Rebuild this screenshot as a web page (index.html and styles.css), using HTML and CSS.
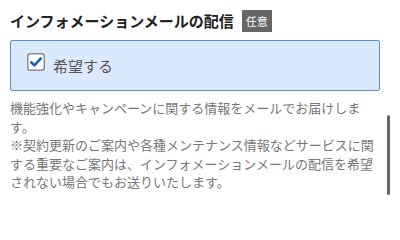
FILE: index.html
```html
<!DOCTYPE html>
<html lang="ja">
<head>
<meta charset="utf-8">
<link rel="stylesheet" href="styles.css">
</head>
<body>
<div class="page">
  <div class="heading">
    <span class="title">インフォメーションメールの配信</span>
    <span class="badge">任意</span>
  </div>
  <label class="option">
    <span class="check">
      <svg width="18" height="18" viewBox="0 0 18 18">
        <rect x="0.75" y="0.75" width="16.5" height="16.5" rx="2.5" fill="#fff" stroke="#8c8c8c" stroke-width="1.5"/>
        <path d="M4.2 9.3 L7.4 12.4 L13.8 5.4" fill="none" stroke="#1b5fb8" stroke-width="2.6" stroke-linecap="round" stroke-linejoin="round"/>
      </svg>
    </span>
    <span class="label">希望する</span>
  </label>
  <p class="desc">機能強化やキャンペーンに関する情報をメールでお届けします。<br>※契約更新のご案内や各種メンテナンス情報などサービスに関する重要なご案内は、インフォメーションメールの配信を希望されない場合でもお送りいたします。</p>
  <div class="scrollbar"></div>
</div>
</body>
</html>
```
FILE: styles.css
```css
html, body {
  margin: 0;
  padding: 0;
  background: #fff;
}
body {
  font-family: "Noto Sans CJK JP", "Noto Sans", sans-serif;
  width: 400px;
  height: 205px;
  overflow: hidden;
}
.page {
  position: relative;
  padding: 10px 20px 0 10px;
}
.heading {
  display: flex;
  align-items: center;
  gap: 8px;
  height: 22px;
}
.title {
  font-size: 15px;
  font-weight: bold;
  color: #222;
  line-height: 22px;
}
.badge {
  background: #666;
  color: #fff;
  font-size: 11px;
  line-height: 22px;
  height: 22px;
  padding: 0 4px;
}
.option {
  display: flex;
  align-items: flex-start;
  gap: 8px;
  margin-top: 8px;
  padding: 12px 16px;
  background: #dbe9fc;
  border: 1px solid #5b8fd8;
  border-radius: 2px;
}
.check {
  display: block;
  width: 18px;
  height: 18px;
}
.check svg {
  display: block;
}
.label {
  font-size: 15px;
  line-height: 25px;
  margin-top: 0;
  color: #555;
}
.desc {
  margin: 8px 0 0;
  font-size: 13px;
  line-height: 18.6px;
  color: #777;
}
.scrollbar {
  position: absolute;
  left: 387px;
  top: 115px;
  width: 3px;
  height: 80px;
  border-radius: 2px;
  background: #666;
}
```
